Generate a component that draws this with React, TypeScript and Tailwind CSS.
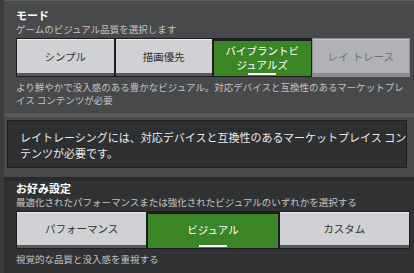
import React from "react";

type Variant = "normal" | "selected" | "disabled";

function Btn({ variant, children }: { variant: Variant; children: React.ReactNode }) {
  if (variant === "selected") {
    return (
      <div className="relative flex flex-col border border-[#1e1e1f] bg-[#1e1e1f] pt-[2px]">
        <div className="flex flex-1 items-center justify-center bg-[#3c8527] pb-[2px] text-center text-[10.5px] leading-[14px] text-white">
          {children}
        </div>
        <div className="absolute bottom-[1px] left-1/2 h-[2px] w-[28px] -translate-x-1/2 bg-white" />
      </div>
    );
  }
  if (variant === "disabled") {
    return (
      <div className="flex flex-col border border-[#8c8d90] bg-[#8c8d90]">
        <div className="flex flex-1 items-center justify-center gap-[4px] border-t border-[#c2c3c5] bg-[#b1b2b5] text-[10.5px] text-[#717275]">
          {children}
        </div>
        <div className="h-[3px] bg-[#8c8d90]" />
      </div>
    );
  }
  return (
    <div className="flex flex-col border border-[#1e1e1f] bg-[#58585a]">
      <div className="flex flex-1 items-center justify-center border-t border-[#ececee] bg-[#d0d1d4] text-[10.5px] text-[#313233]">
        {children}
      </div>
      <div className="h-[3px] bg-[#58585a]" />
    </div>
  );
}

export default function App() {
  return (
    <div className="h-[273px] w-[414px] overflow-hidden border-l-4 border-[#3b3c3e] bg-[#313233] font-['Noto_Sans_CJK_JP','Noto_Sans',sans-serif]">
      {/* Mode section */}
      <div className="border-t border-[#5a5b5c] bg-[#48494a] pb-[6px] pl-3 pr-1 pt-[7px]">
        <div className="text-[11px] font-bold leading-[14px] text-white">モード</div>
        <div className="text-[9.5px] leading-[14px] text-[#c4c4c6]">ゲームのビジュアル品質を選択します</div>
        <div className="mt-[2px] grid h-[39px] grid-cols-4">
          <Btn variant="normal">シンプル</Btn>
          <Btn variant="normal">描画優先</Btn>
          <Btn variant="selected">
            バイブラントビ
            <br />
            ジュアルズ
          </Btn>
          <Btn variant="disabled">
            <span>レイ</span>
            <span>トレース</span>
          </Btn>
        </div>
        <div className="mt-[4px] whitespace-nowrap text-[9.5px] leading-[13px] text-[#c4c4c6]">
          <div>より鮮やかで没入感のある豊かなビジュアル。対応デバイスと互換性のあるマーケットプレ</div>
          <div>イス コンテンツが必要</div>
        </div>
      </div>

      {/* Message section */}
      <div className="border-b-4 border-t-4 border-b-[#2a2b2d] border-t-[#58595b] bg-[#48494a] pb-[9px] pl-[3px] pr-[7px] pt-[3px]">
        <div className="border border-[#1e1e1f] bg-[#2e2f31] px-3 pb-[6px] pt-[8px] text-[11px] leading-[16px] text-[#ececec]">
          <div className="whitespace-nowrap">レイトレーシングには、対応デバイスと互換性のあるマーケットプレイス コン</div>
          <div className="whitespace-nowrap">テンツが必要です。</div>
        </div>
      </div>

      {/* Preferences section */}
      <div className="pl-3 pr-1 pt-0">
        <div className="text-[11px] font-bold leading-[14px] text-white">お好み設定</div>
        <div className="text-[9.5px] leading-[14px] text-[#c4c4c6]">
          最適化されたパフォーマンスまたは強化されたビジュアルのいずれかを選択する
        </div>
        <div className="mt-[2px] grid h-[38px] grid-cols-3">
          <Btn variant="normal">パフォーマンス</Btn>
          <Btn variant="selected">ビジュアル</Btn>
          <Btn variant="normal">カスタム</Btn>
        </div>
        <div className="mt-[4px] text-[9.5px] leading-[13px] text-[#c4c4c6]">視覚的な品質と没入感を重視する</div>
      </div>
    </div>
  );
}
